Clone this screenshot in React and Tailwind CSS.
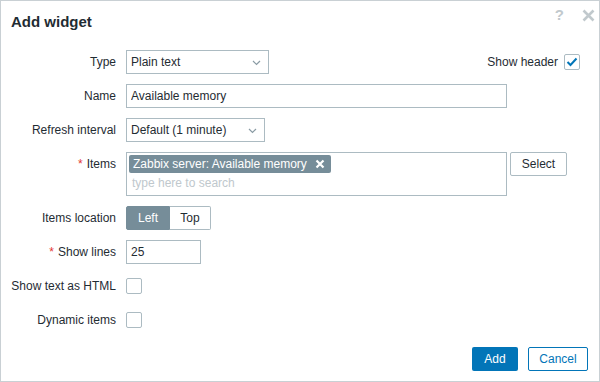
import React from "react";

const Chevron = () => (
  <svg width="9" height="6" viewBox="0 0 9 6" className="absolute right-[7px] top-[9px]">
    <polyline points="1,1 4.5,4.5 8,1" fill="none" stroke="#8a9ba4" strokeWidth="1.2" />
  </svg>
);

const Checkbox = ({ checked }) => (
  <span className="w-[16px] h-[16px] border border-[#acbbc2] rounded-[2px] bg-white flex items-center justify-center">
    {checked && (
      <svg width="12" height="10" viewBox="0 0 12 10">
        <polyline points="1.5,5 4.5,8 10.5,1.5" fill="none" stroke="#0275b8" strokeWidth="2" />
      </svg>
    )}
  </span>
);

const Label = ({ children, required }) => (
  <div className="text-right leading-[24px] whitespace-nowrap">
    {required && <span className="text-[#e33734] mr-[4px]">*</span>}
    {children}
  </div>
);

const Select = ({ value, width }) => (
  <div className={`relative h-[24px] border border-[#acbbc2] bg-white pl-[4px] leading-[22px] ${width}`}>
    {value}
    <Chevron />
  </div>
);

export default function App() {
  return (
    <div className="w-[600px] h-[382px] bg-white border border-[#c9d0d4] flex flex-col font-['Liberation_Sans',Arial,sans-serif] text-[12px] text-[#1f2c33]">
      <div className="h-[40px] flex justify-between pl-[10px] pr-[4px]">
        <h4 className="pt-[12px] text-[15px] leading-[18px] font-bold">Add widget</h4>
        <div className="flex items-start gap-[18px] pt-[5px]">
          <span className="text-[15px] leading-[18px] font-bold text-[#c1c9cd]">?</span>
          <svg width="13" height="13" viewBox="0 0 13 13" className="mt-[3px]">
            <path d="M1.5 1.5 L11.5 11.5 M11.5 1.5 L1.5 11.5" stroke="#c1c9cd" strokeWidth="2.6" />
          </svg>
        </div>
      </div>

      <div className="grid grid-cols-[115px_1fr] gap-x-[10px] gap-y-[10px] pt-[9px] pr-[19px]">
        <Label>Type</Label>
        <div className="flex items-center">
          <Select value="Plain text" width="w-[143px]" />
          <span className="ml-auto mr-[6px]">Show header</span>
          <Checkbox checked />
        </div>

        <Label>Name</Label>
        <input
          readOnly
          value="Available memory"
          className="w-[381px] h-[24px] border border-[#acbbc2] px-[4px] outline-none"
        />

        <Label>Refresh interval</Label>
        <Select value="Default (1 minute)" width="w-[139px]" />

        <Label required>Items</Label>
        <div className="flex items-start gap-[3px]">
          <div className="w-[381px] h-[44px] border border-[#acbbc2] p-[2px] flex flex-col">
            <span className="self-start h-[18px] bg-[#768d99] text-white rounded-[2px] pl-[4px] pr-[6px] flex items-center gap-[8px] leading-[18px]">
              Zabbix server: Available memory
              <svg width="10" height="10" viewBox="0 0 10 10">
                <path d="M1.5 1.5 L8.5 8.5 M8.5 1.5 L1.5 8.5" stroke="#fff" strokeWidth="2.2" />
              </svg>
            </span>
            <span className="text-[#c0c8cd] pl-[3px] mt-[1px] leading-[18px]">type here to search</span>
          </div>
          <button className="w-[57px] h-[24px] border border-[#acbbc2] rounded-[2px] bg-white">Select</button>
        </div>

        <Label>Items location</Label>
        <div className="flex h-[24px]">
          <span className="w-[44px] bg-[#768d99] text-white border border-[#768d99] rounded-l-[2px] flex items-center justify-center">Left</span>
          <span className="w-[41px] border border-l-0 border-[#acbbc2] rounded-r-[2px] flex items-center justify-center">Top</span>
        </div>

        <Label required>Show lines</Label>
        <input
          readOnly
          value="25"
          className="w-[75px] h-[24px] border border-[#acbbc2] px-[4px] outline-none"
        />

        <Label>Show text as HTML</Label>
        <div className="h-[24px] flex items-center"><Checkbox /></div>

        <Label>Dynamic items</Label>
        <div className="h-[24px] flex items-center"><Checkbox /></div>
      </div>

      <div className="mt-auto flex justify-end gap-[10px] pr-[11px] pb-[10px]">
        <button className="w-[46px] h-[24px] bg-[#0275b8] text-white rounded-[2px]">Add</button>
        <button className="w-[60px] h-[24px] border border-[#0275b8] text-[#0275b8] rounded-[2px] bg-white">Cancel</button>
      </div>
    </div>
  );
}
